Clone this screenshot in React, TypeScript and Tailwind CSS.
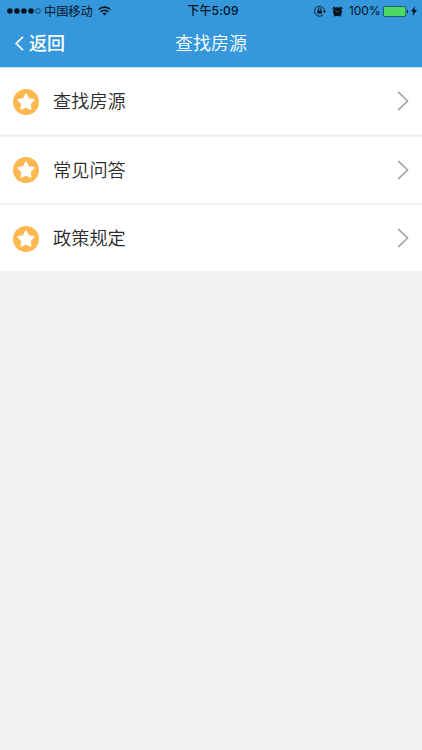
import type { FC } from "react";

const items = ["查找房源", "常见问答", "政策规定"];

const StatusBar: FC = () => {
  return (
    <div className="grid h-[22px] grid-cols-[1fr_auto_1fr] items-center text-xs text-[#06121c]">
      <div className="flex items-center pl-[7px]">
        <svg width="34" height="6" viewBox="0 0 34 6" fill="currentColor">
          <circle cx="2.9" cy="3" r="2.8" />
          <circle cx="9.9" cy="3" r="2.8" />
          <circle cx="16.9" cy="3" r="2.8" />
          <circle cx="24" cy="3" r="2.8" />
          <circle cx="31" cy="3" r="2.4" fill="none" stroke="currentColor" strokeWidth="0.6" />
        </svg>
        <span className="ml-[3px] pt-0.5 text-[12.2px]">中国移动</span>
        <svg className="ml-[5px]" width="13" height="10" viewBox="0 0 13 10" fill="none" stroke="currentColor" strokeWidth="1.7">
          <path d="M0.7 3.5a8.4 8.4 0 0 1 11.6 0" />
          <path d="M2.8 5.8a5.4 5.4 0 0 1 7.4 0" />
          <path d="M6.5 9.4 4.5 7.4a2.9 2.9 0 0 1 4 0Z" fill="currentColor" stroke="none" />
        </svg>
      </div>
      <span className="pl-[4px] font-medium tracking-[0.2px]">下午5:09</span>
      <div className="flex items-center justify-end pr-[5px]">
        <svg width="12" height="12" viewBox="0 0 12 12" fill="none" stroke="currentColor" strokeWidth="0.9">
          <path d="M9.2 9.6a5 5 0 1 1 1.3-3.2" />
          <path d="M8.9 5.9h3.1l-1.5 2Z" fill="currentColor" stroke="none" />
          <rect x="3.3" y="5.4" width="4.6" height="3.2" fill="currentColor" stroke="none" />
          <path d="M4.2 5.5V4.3a1.4 1.4 0 0 1 2.8 0v1.2" />
        </svg>
        <svg className="ml-[6px]" width="11" height="11" viewBox="0 0 11 11">
          <circle cx="5.5" cy="5.8" r="4.5" fill="currentColor" />
          <path d="M0.7 2.9 2.9 1M10.3 2.9 8.1 1M2.9 9.1l-.8 1.2M8.1 9.1l.8 1.2" stroke="currentColor" strokeWidth="1.4" />
          <path d="M3.6 4.6 5.5 6 7.2 5.2" fill="none" stroke="#3598dc" strokeWidth="0.6" />
        </svg>
        <span className="ml-[6px] w-[31px] whitespace-nowrap text-[12px] tracking-[-0.1px]">100%</span>
        <svg className="ml-[3px]" width="26" height="11" viewBox="0 0 26 11">
          <rect x="0.5" y="0.5" width="22.4" height="10" rx="1.5" fill="#4cd964" stroke="#174564" strokeWidth="0.8" />
          <path d="M24 3.7c1.6.4 1.6 3.2 0 3.6Z" fill="#0b1c2b" />
        </svg>
        <svg className="ml-[2px]" width="6" height="10" viewBox="0 0 6 10" fill="currentColor">
          <path d="M4 0 0 5.5h2.4L1.6 10 6 4.1H3.4Z" />
        </svg>
      </div>
    </div>
  );
};

const Row: FC<{ label: string }> = ({ label }) => {
  return (
    <a className="flex h-[66px] items-center bg-white px-[13px]">
      <svg width="26" height="27" viewBox="0 0 26 27">
        <circle cx="13" cy="14" r="13" fill="#ffb74f" />
        <path
          d="m13 6.2 2.5 4.8 5.2.9-3.7 3.8.7 5.3-4.7-2.3-4.7 2.3.7-5.3-3.7-3.8 5.2-.9Z"
          fill="#fff"
          stroke="#fff"
          strokeWidth="1.6"
          strokeLinejoin="round"
        />
      </svg>
      <span className="ml-[14px] flex-1 pt-0.5 text-[18.2px] font-[350] text-[#2b2b2b]">{label}</span>
      <svg width="12" height="20" viewBox="0 0 12 20" fill="none" stroke="#a3a3a3" strokeWidth="1.6">
        <path d="m1 .8 9.6 9.2L1 19.2" />
      </svg>
    </a>
  );
};

const App: FC = () => {
  return (
    <div className="min-h-screen bg-[#f1f1f1] font-['Inter','Noto_Sans_CJK_SC',sans-serif]">
      <header className="h-[68px] border-b border-[#c3e0f4] bg-[#3598dc]">
        <StatusBar />
        <div className="grid h-[43px] grid-cols-[1fr_auto_1fr] items-center text-lg text-white">
          <button className="flex items-center pl-[15px]">
            <svg width="9" height="15" viewBox="0 0 9 15" fill="none" stroke="currentColor" strokeWidth="1.7">
              <path d="M8 .8 1.2 7.5 8 14.2" />
            </svg>
            <span className="ml-[5px] font-medium">返回</span>
          </button>
          <h1 className="font-[350]">查找房源</h1>
        </div>
      </header>
      <main className="flex flex-col gap-[2.5px]">
        {items.map((item) => (
          <Row key={item} label={item} />
        ))}
      </main>
    </div>
  );
};

export default App;
